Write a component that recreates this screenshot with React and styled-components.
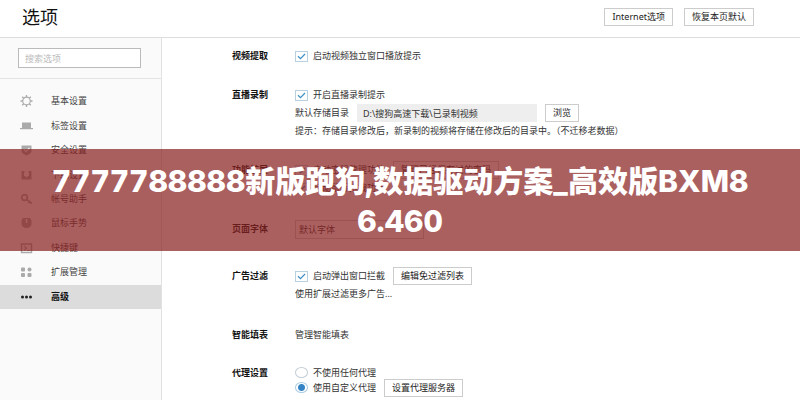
import React from 'react';
import styled, { createGlobalStyle, css } from 'styled-components';

const GlobalStyle = createGlobalStyle`
  * {
    box-sizing: border-box;
  }

  body {
    margin: 0;
    background-color: #fff;
    overflow: hidden;
  }

  body,
  button,
  input,
  select {
    font-family: 'Noto Sans', 'Noto Sans CJK SC', sans-serif;
    font-size: 9px;
    line-height: 14px;
    color: #333;
  }
`;

const Page = styled.div`
  position: relative;
  display: flex;
  flex-direction: column;
  height: 100vh;
`;

const Header = styled.header`
  display: flex;
  align-items: center;
  flex: none;
  gap: 11px;
  height: 38px;
  padding: 0 46px 3px 22px;
  border-bottom: 1px solid #ddd;
`;

const Title = styled.h1`
  margin: 0 auto 0 0;
  font-size: 18px;
  font-weight: 400;
  line-height: 24px;
  color: #111;
`;

const Button = styled.button`
  flex: none;
  height: 18px;
  margin: 0;
  padding: 0 7px;
  border: 1px solid #ccc;
  background-color: transparent;
  line-height: 16px;
  color: #222;
  white-space: nowrap;
`;

const Body = styled.div`
  display: flex;
  flex: 1;
  min-height: 0;
`;

const Sidebar = styled.aside`
  flex: none;
  width: 162px;
  border-right: 1px solid #e2e2e2;
  background-color: #fafafa;
`;

const SearchBox = styled.div`
  padding: 10px 20px 10px 18px;
  border-bottom: 1px solid #e4e4e4;
`;

const SearchInput = styled.input`
  display: block;
  width: 100%;
  height: 20px;
  padding: 0 6px;
  border: 1px solid #bbb;
  background-color: #fff;

  &::placeholder {
    color: #bbb;
  }
`;

const Menu = styled.ul`
  display: grid;
  grid-auto-rows: 1fr;
  height: 220px;
  margin: 10px 0 0;
  padding: 0;
  list-style: none;
`;

const MenuLink = styled.a`
  display: flex;
  align-items: center;
  gap: 18px;
  height: 100%;
  padding: 0 20px;
  color: #444;
  text-decoration: none;

  ${p =>
    p.$active &&
    css`
      background-color: #dcdcdc;
      font-weight: 700;
      color: #111;
    `}
`;

const MenuIcon = styled.svg`
  flex: none;
  width: 13px;
  height: 14px;
  fill: currentColor;
  color: ${p => (p.$active ? '#222' : '#aaa')};
`;

const Content = styled.main`
  flex: 1;
  min-width: 0;
  padding: 9px 20px 0 70px;
`;

const SectionStyled = styled.section`
  display: grid;
  grid-template-columns: 63px 1fr;
  min-height: ${p => p.$height}px;
`;

const SectionTitle = styled.h2`
  margin: 0;
  font-size: 9px;
  font-weight: 700;
  line-height: 18px;
  color: #111;
`;

const Row = styled.div`
  display: flex;
  align-items: center;
  gap: 8px;
  height: ${p => (p.$compact ? 15 : 18)}px;
  white-space: nowrap;
`;

const RadioGroup = styled.div`
  padding-top: 1px;
`;

const Label = styled.label`
  display: flex;
  align-items: center;
  gap: 5px;
`;

const Checkbox = styled.input.attrs({ type: 'checkbox' })`
  appearance: none;
  width: 13px;
  height: 11px;
  margin: 0;
  border: 1px solid #b8d0e0;
  background-color: #fff;

  &:checked {
    background: #fff
      url("data:image/svg+xml,%3Csvg xmlns='http://www.w3.org/2000/svg' viewBox='0 0 11 9'%3E%3Cpath d='M2 4.2l2.5 2.4L9 2' fill='none' stroke='%233d8fc4' stroke-width='1.2'/%3E%3C/svg%3E")
      center / 100% no-repeat;
  }
`;

const Radio = styled.input.attrs({ type: 'radio' })`
  appearance: none;
  width: 13px;
  height: 11px;
  margin: 0;
  border: 1px solid #c4cdd3;
  border-radius: 50%;

  &:checked {
    border-color: #a9cce4;
    background: radial-gradient(circle, #3585c6 3px, #fff 4px);
  }
`;

const PathInput = styled.input`
  width: 180px;
  height: 18px;
  padding: 0 6px;
  border: 0;
  background-color: #eee;
`;

const FontSelect = styled.select`
  appearance: none;
  width: 129px;
  height: 19px;
  padding: 0 3px;
  border: 1px solid #ccc;
  border-radius: 0;
  background-color: #fff;
`;

const Banner = styled.div`
  position: absolute;
  top: 149px;
  right: 0;
  left: 0;
  padding: 12px 48px 10px;
  background-color: rgba(139, 34, 34, 0.72);
  font-family: Inter, 'Noto Sans CJK SC', sans-serif;
  font-size: 30px;
  font-weight: 800;
  font-variant-numeric: tabular-nums;
  line-height: 40px;
  color: #fff;
  text-align: center;
  word-break: break-all;
`;

const menu = [
  {
    text: '基本设置',
    icon: (
      <>
        <circle cx="6.5" cy="7" r="3.8" fill="none" stroke="currentColor" strokeWidth="1.2" />
        <path
          d="M6.5 1v2M6.5 11v2M.5 7h2M10.5 7h2M2.2 2.7l1.5 1.5M9.3 9.8l1.5 1.5M10.8 2.7L9.3 4.2M3.7 9.8l-1.5 1.5"
          stroke="currentColor"
          strokeWidth="1.3"
        />
      </>
    ),
  },
  { text: '标签设置', icon: <path d="M2 3.5h9V9h2v1.2H0V9h2z" /> },
  {
    text: '安全设置',
    icon: (
      <>
        <path d="M1.5 2.5h10V9l-2 2-3 1.5-3-1.5-2-2z" />
        <path d="M4 6.5l2 2L9.5 5" fill="none" stroke="#fafafa" strokeWidth="1.2" />
      </>
    ),
  },
  {
    text: '下载设置',
    icon: <path d="M1.5 3h3v1.5H4V8h1l1.5 1.5L8 8h1V4.5h-.5V3h3v8.5h-10z" />,
  },
  {
    text: '帐号助手',
    icon: (
      <>
        <circle cx="4.5" cy="5.5" r="2.8" fill="none" stroke="currentColor" strokeWidth="1.7" />
        <path d="M6.7 7.5l5.2 4M9.5 9.5l-1 1.5" stroke="currentColor" strokeWidth="1.7" />
      </>
    ),
  },
  {
    text: '鼠标手势',
    icon: (
      <>
        <path d="M3 2h7l1.5 2.5V8c0 2-2 4-5 4s-5-2-5-4V4.5z" />
        <path d="M6.5 3v4" stroke="#fafafa" strokeWidth="1.4" />
      </>
    ),
  },
  {
    text: '快捷键',
    icon: (
      <>
        <path d="M1.5 3h10v8.5h-10z" fill="none" stroke="currentColor" strokeWidth="1.4" />
        <path d="M4 5l2.5 2L4 9.5M7 9.5h3" fill="none" stroke="currentColor" strokeWidth="1.2" />
      </>
    ),
  },
  {
    text: '扩展管理',
    icon: (
      <>
        <rect x="1" y="2.5" width="4" height="4" rx="1" />
        <rect x="7.5" y="2.5" width="4" height="4" rx="2" />
        <rect x="1" y="8" width="4" height="4" rx="1" />
        <rect x="7.5" y="8" width="4" height="4" rx="1" />
      </>
    ),
  },
  {
    text: '高级',
    active: true,
    icon: (
      <>
        <circle cx="2.5" cy="7" r="1.5" />
        <circle cx="6.5" cy="7" r="1.5" />
        <circle cx="10.5" cy="7" r="1.5" />
      </>
    ),
  },
];

const MenuItem = ({ icon, text, active }) => (
  <li>
    <MenuLink href="#" $active={active}>
      <MenuIcon viewBox="0 0 13 14" $active={active}>
        {icon}
      </MenuIcon>
      {text}
    </MenuLink>
  </li>
);

const Section = ({ title, height, children }) => (
  <SectionStyled $height={height}>
    <SectionTitle>{title}</SectionTitle>
    <div>{children}</div>
  </SectionStyled>
);

const App = () => (
  <Page>
    <GlobalStyle />
    <Header>
      <Title>选项</Title>
      <Button>Internet选项</Button>
      <Button>恢复本页默认</Button>
    </Header>
    <Body>
      <Sidebar>
        <SearchBox>
          <SearchInput type="search" aria-label="搜索选项" placeholder="搜索选项" />
        </SearchBox>
        <Menu>
          {menu.map(item => (
            <MenuItem key={item.text} {...item} />
          ))}
        </Menu>
      </Sidebar>
      <Content>
        <Section title="视频提取" height={39}>
          <Row>
            <Label>
              <Checkbox defaultChecked />
              启动视频独立窗口播放提示
            </Label>
          </Row>
        </Section>
        <Section title="直播录制" height={75}>
          <Row>
            <Label>
              <Checkbox defaultChecked />
              开启直播录制提示
            </Label>
          </Row>
          <Row>
            <label htmlFor="path">默认存储目录</label>
            <PathInput id="path" readOnly defaultValue="D:\搜狗高速下载\已录制视频" />
            <Button>浏览</Button>
          </Row>
          <Row>提示：存储目录修改后，新录制的视频将存储在修改后的目录中。（不迁移老数据）</Row>
        </Section>
        <Section title="功能扩展" height={59}>
          <Row>
            <Label>
              <Checkbox defaultChecked />
              启动密码管理功能
            </Label>
            <Button>管理已经保存过的密码</Button>
          </Row>
          <Row>
            <Label>
              <Checkbox defaultChecked />
              启动鼠标拖拽功能
            </Label>
          </Row>
        </Section>
        <Section title="页面字体" height={47}>
          <FontSelect aria-label="页面字体">
            <option>默认字体</option>
          </FontSelect>
        </Section>
        <Section title="广告过滤" height={59}>
          <Row>
            <Label>
              <Checkbox defaultChecked />
              启动弹出窗口拦截
            </Label>
            <Button>编辑免过滤列表</Button>
          </Row>
          <Row>使用扩展过滤更多广告...</Row>
        </Section>
        <Section title="智能填表" height={38}>
          <Row>管理智能填表</Row>
        </Section>
        <Section title="代理设置" height={36}>
          <RadioGroup>
            <Row $compact>
              <Label>
                <Radio name="proxy" />
                不使用任何代理
              </Label>
            </Row>
            <Row $compact>
              <Label>
                <Radio name="proxy" defaultChecked />
                使用自定义代理
              </Label>
              <Button>设置代理服务器</Button>
            </Row>
          </RadioGroup>
        </Section>
      </Content>
    </Body>
    <Banner>7777788888新版跑狗,数据驱动方案_高效版BXM86.460</Banner>
  </Page>
);

export default App;
